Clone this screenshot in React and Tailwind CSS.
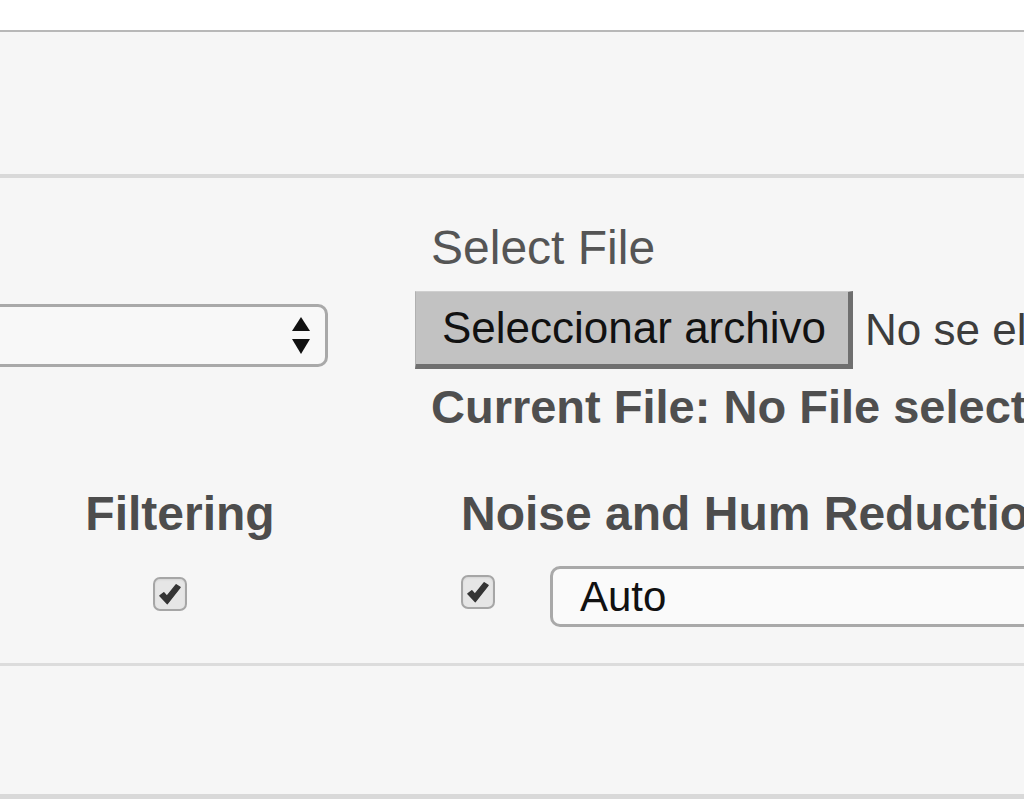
import React from 'react';

const font = { fontFamily: '"Liberation Sans", Arial, Helvetica, sans-serif' };

const CheckBox = ({ className = '' }) => (
  <span className={`flex h-[34px] w-[34px] items-center justify-center rounded-[7px] border-2 border-[#a6a6a6] bg-[#e6e6e6] shadow-[inset_0_1px_2px_rgba(0,0,0,0.08)] ${className}`}>
    <svg viewBox="0 0 34 34" className="h-[32px] w-[32px]">
      <path
        d="M5.5 19 L10 15.5 L13.5 19.5 L24 6.5 L28.5 9.5 L14 28 Z"
        fill="#353535"
        stroke="#353535"
        strokeWidth="1.5"
        strokeLinejoin="round"
      />
    </svg>
  </span>
);

const SelectArrows = () => (
  <svg viewBox="0 0 20 40" className="h-[40px] w-[20px]">
    <path d="M10 1 L19 15 L1 15 Z" fill="#111" />
    <path d="M1 23 L19 23 L10 38 Z" fill="#111" />
  </svg>
);

const App = () => {
  return (
    <div className="min-h-[800px] w-[1024px] overflow-hidden bg-white text-[#555]" style={font}>
      {/* top strip */}
      <div className="h-[30px] bg-white" />

      {/* header panel */}
      <div className="h-[148px] border-t-2 border-b-4 border-t-[#b8b8b8] border-b-[#d9d9d9] bg-[#f6f6f6]" />

      {/* settings panel */}
      <div className="border-b-[3px] border-[#dcdcdc] bg-[#f6f6f6] pb-[36px] pt-[46px]">
        <div className="flex">
          <div className="w-[415px] shrink-0">
            <div className="-ml-[20px] mt-[80px] flex h-[63px] w-[348px] items-center justify-end rounded-[10px] border-[3px] border-[#a9a9a9] bg-[#f8f8f8] pr-[14px]">
              <SelectArrows />
            </div>
          </div>

          <div className="flex min-w-0 flex-col">
            <div className="ml-[16px] text-[48px] leading-none text-[#555]">Select File</div>
            <div className="mt-[19px] flex items-center">
              <button className="h-[78px] w-[438px] shrink-0 border-b-[5px] border-r-[5px] border-l border-t border-b-[#6f6f6f] border-r-[#6f6f6f] border-l-[#b0b0b0] border-t-[#cfcfcf] bg-[#c2c2c2] pl-[4px] text-[44px] leading-none text-[#111]">
                Seleccionar archivo
              </button>
              <span className="ml-[12px] whitespace-nowrap text-[44px] leading-none text-[#3d3d3d]">
                No se eligió archivo
              </span>
            </div>
            <div className="ml-[16px] mt-[14px] whitespace-nowrap text-[47px] font-bold leading-none text-[#4f4f4f]">
              Current File: No File selected
            </div>
          </div>
        </div>

        <div className="mt-[60px] flex">
          <div className="flex w-[360px] shrink-0 flex-col items-center">
            <div className="text-[48px] font-bold leading-none text-[#4d4d4d]">Filtering</div>
            <CheckBox className="mr-[20px] mt-[39px]" />
          </div>

          <div className="ml-[101px] flex flex-col">
            <div className="whitespace-nowrap text-[48px] font-bold leading-none text-[#4d4d4d]">
              Noise and Hum Reduction
            </div>
            <div className="mt-[28px] flex items-start">
              <CheckBox className="mt-[9px]" />
              <div className="ml-[55px] flex h-[61px] w-[560px] shrink-0 items-center rounded-[10px] border-[3px] border-[#a9a9a9] bg-[#fafafa] pl-[27px] text-[42px] leading-none text-[#111]">
                Auto
              </div>
            </div>
          </div>
        </div>
      </div>

      {/* footer panel */}
      <div className="h-[133px] border-b-[5px] border-[#d9d9d9] bg-[#f6f6f6]" />
    </div>
  );
};

export default App;
